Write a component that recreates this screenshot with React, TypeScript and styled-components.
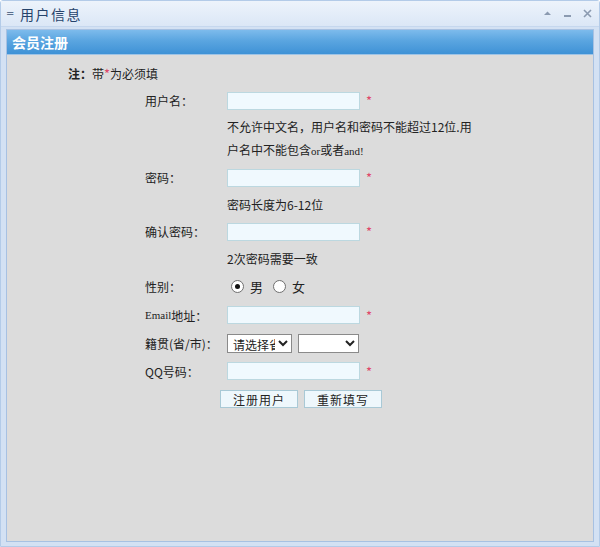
import React from "react";
import styled, { createGlobalStyle } from "styled-components";

const GlobalStyle = createGlobalStyle`
  html, body { margin: 0; padding: 0; }
  body {
    font-family: "Noto Sans CJK SC", "DejaVu Sans", sans-serif;
    font-size: 12px;
    color: #222;
  }
  * { box-sizing: border-box; }
`;

const Window = styled.div`
  width: 600px;
  height: 547px;
  display: flex;
  flex-direction: column;
  background: #d3e1f3;
  border: 1px solid #b3cbe8;
  border-radius: 3px 3px 0 0;
`;

const TitleBar = styled.div`
  height: 26px;
  display: flex;
  align-items: center;
  padding: 0 6px 0 5px;
  background: linear-gradient(#edf3fb, #dbe7f6);
  border-bottom: 1px solid #c5d7ee;
`;

const Grip = styled.span`
  font-size: 10px;
  color: #5b6f8c;
  width: 12px;
  font-family: "DejaVu Sans", sans-serif;
`;

const Title = styled.span`
  font-size: 14px;
  letter-spacing: 1.5px;
  color: #26436b;
  margin-left: 2px;
`;

const Tools = styled.div`
  margin-left: auto;
  display: flex;
  gap: 9px;
  align-items: center;
`;

const ToolIcon = styled.svg`
  width: 11px;
  height: 11px;
  display: block;
`;

const Body = styled.div`
  flex: 1;
  display: flex;
  padding: 2px 5px 4px 5px;
`;

const Panel = styled.div`
  flex: 1;
  display: flex;
  flex-direction: column;
  border: 1px solid #a7c1e2;
`;

const PanelHeader = styled.div`
  height: 25px;
  display: flex;
  align-items: center;
  padding-left: 5px;
  background: linear-gradient(#7dbbec, #5aa5e0 45%, #3f92d6);
  border-bottom: 1px solid #9fc4e6;
  color: #fff;
  font-weight: bold;
  font-size: 14px;
`;

const PanelBody = styled.div`
  flex: 1;
  background: #dcdcdc;
  padding: 4px 0 0 61px;
`;

const Note = styled.div`
  height: 28px;
  display: flex;
  align-items: center;
  font-size: 12px;
`;

const Bold = styled.b`
  font-weight: bold;
`;

const Star = styled.span`
  color: #e0486a;
  font-size: 13px;
`;

const Form = styled.div`
  display: grid;
  grid-template-columns: 82px 240px;
  margin-left: 77px;
`;

const Label = styled.div<{ $h?: number }>`
  height: ${(p) => p.$h ?? 27}px;
  display: flex;
  align-items: center;
  white-space: nowrap;
`;

const Field = styled.div<{ $h?: number; $gap?: number }>`
  height: ${(p) => p.$h ?? 27}px;
  display: flex;
  align-items: center;
  gap: ${(p) => p.$gap ?? 5}px;
`;

const Help = styled.div<{ $h?: number }>`
  grid-column: 2;
  height: ${(p) => p.$h ?? 27}px;
  line-height: 23px;
  display: flex;
  flex-direction: column;
  justify-content: center;
  white-space: nowrap;
`;

const TextInput = styled.input`
  width: 133px;
  height: 18px;
  padding: 0 2px;
  border: 1px solid #bcd8e0;
  background: #f0f9fe;
  font-size: 12px;
  outline: none;
`;

const StarMark = styled(Star)`
  margin-left: 1px;
`;

const RadioLabel = styled.label`
  display: flex;
  align-items: center;
  gap: 6px;
  margin-right: 2px;
  font-size: 13px;
`;

const Radio = styled.input`
  appearance: none;
  margin: 0 0 0 4px;
  width: 13px;
  height: 13px;
  border-radius: 50%;
  border: 1px solid #6f6f6f;
  background: #fff;
  display: grid;
  place-content: center;
  &:checked::before {
    content: "";
    width: 5px;
    height: 5px;
    border-radius: 50%;
    background: #111;
  }
`;

const Select = styled.select<{ $w: number }>`
  width: ${(p) => p.$w}px;
  height: 19px;
  font-size: 12px;
  line-height: 17px;
  font-family: "Noto Sans CJK SC", sans-serif;
  padding: 0 0 0 1px;
  border: 1px solid #8a8a8a;
  background: #fff;
  color: #222;
`;

const Buttons = styled.div`
  grid-column: 1 / span 2;
  height: 28px;
  display: flex;
  align-items: center;
  gap: 6px;
  padding-left: 75px;
`;

const Btn = styled.button`
  width: 78px;
  height: 18px;
  padding: 0;
  border: 1px solid #a9c9d6;
  background: #eef7fc;
  font-family: "Noto Sans CJK SC", sans-serif;
  font-size: 12px;
  letter-spacing: 1px;
  color: #222;
`;

const Mono = styled.span`
  font-family: "Liberation Serif", serif;
  font-size: 11px;
`;

export default function App() {
  return (
    <>
      <GlobalStyle />
      <Window>
        <TitleBar>
          <Grip>=</Grip>
          <Title>用户信息</Title>
          <Tools>
            <ToolIcon viewBox="0 0 11 11">
              <path d="M2 7 L5.5 3.5 L9 7 Z" fill="#8b9ab0" />
            </ToolIcon>
            <ToolIcon viewBox="0 0 11 11">
              <rect x="2" y="7" width="7" height="2" fill="#8b9ab0" />
            </ToolIcon>
            <ToolIcon viewBox="0 0 11 11">
              <path d="M2 2 L9 9 M9 2 L2 9" stroke="#8b9ab0" strokeWidth="1.6" />
            </ToolIcon>
          </Tools>
        </TitleBar>
        <Body>
          <Panel>
            <PanelHeader>会员注册</PanelHeader>
            <PanelBody>
              <Note>
                <Bold>注：</Bold>带<Star>*</Star>为必须填
              </Note>
              <Form>
                <Label>用户名：</Label>
                <Field>
                  <TextInput />
                  <StarMark>*</StarMark>
                </Field>
                <Help $h={50}>
                  <span>不允许中文名，用户名和密码不能超过12位.用</span>
                  <span>
                    户名中不能包含<Mono>or</Mono>或者<Mono>and!</Mono>
                  </span>
                </Help>

                <Label>密码：</Label>
                <Field>
                  <TextInput type="password" />
                  <StarMark>*</StarMark>
                </Field>
                <Help>密码长度为6-12位</Help>

                <Label>确认密码：</Label>
                <Field>
                  <TextInput type="password" />
                  <StarMark>*</StarMark>
                </Field>
                <Help>2次密码需要一致</Help>

                <Label $h={29}>性别：</Label>
                <Field $h={29} $gap={4}>
                  <RadioLabel>
                    <Radio type="radio" name="sex" defaultChecked />男
                  </RadioLabel>
                  <RadioLabel>
                    <Radio type="radio" name="sex" />女
                  </RadioLabel>
                </Field>

                <Label $h={28}>
                  <Mono>Email</Mono>地址：
                </Label>
                <Field $h={28}>
                  <TextInput />
                  <StarMark>*</StarMark>
                </Field>

                <Label $h={28}>籍贯(省/市)：</Label>
                <Field $h={28} $gap={6}>
                  <Select $w={65} defaultValue="">
                    <option value="">请选择省</option>
                  </Select>
                  <Select $w={61} defaultValue="">
                    <option value=""></option>
                  </Select>
                </Field>

                <Label $h={28}>QQ号码：</Label>
                <Field $h={28}>
                  <TextInput />
                  <StarMark>*</StarMark>
                </Field>

                <Buttons>
                  <Btn>注册用户</Btn>
                  <Btn>重新填写</Btn>
                </Buttons>
              </Form>
            </PanelBody>
          </Panel>
        </Body>
      </Window>
    </>
  );
}
